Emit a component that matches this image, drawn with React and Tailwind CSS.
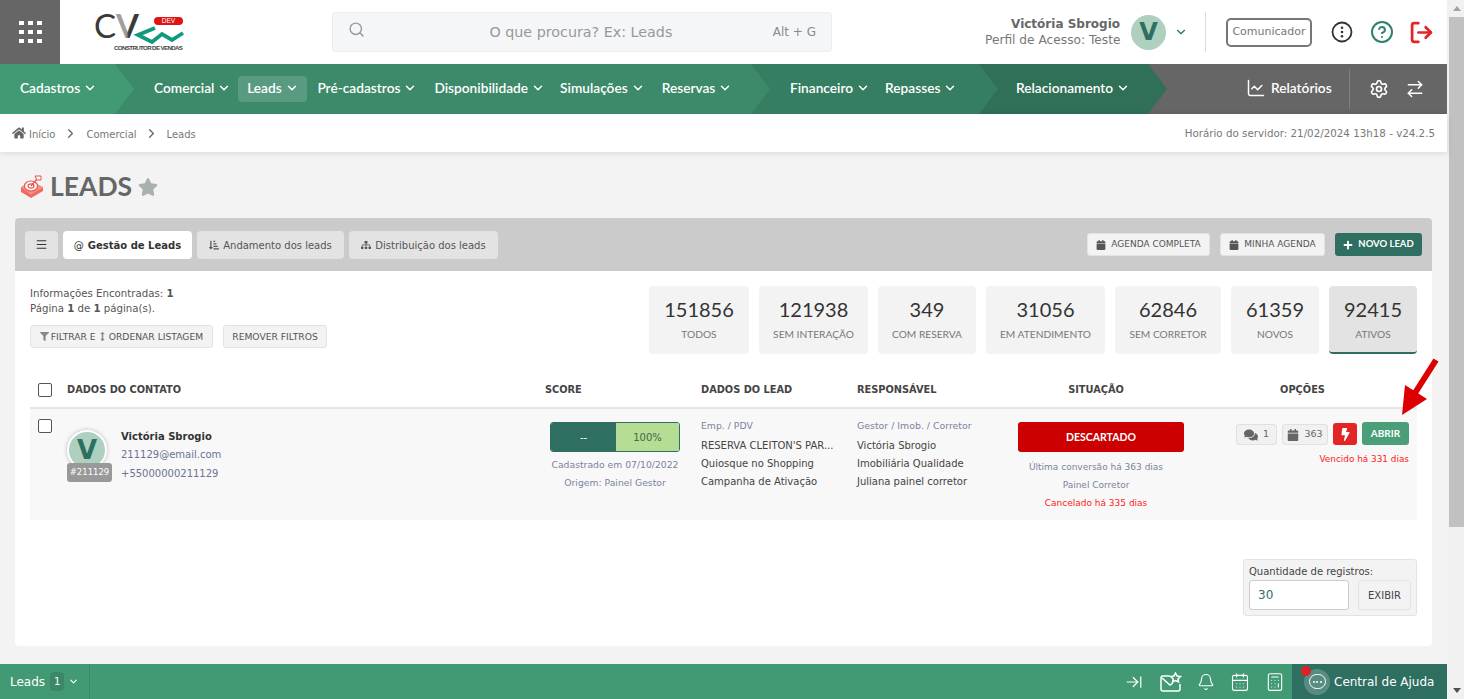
import React from "react";
import {
  ArrowRightLeft,
  ArrowRightToLine,
  Bell,
  Calculator,
  CalendarDays,
  ChartLine,
  ChevronDown,
  ChevronRight,
  CircleHelp,
  LogOut,
  Menu,
  Search,
  Settings,
} from "lucide-react";
import {
  FaArrowsAltV,
  FaBolt,
  FaCalendar,
  FaComments,
  FaFilter,
  FaHome,
  FaPlus,
  FaSitemap,
  FaSortAmountDownAlt,
  FaStar,
} from "react-icons/fa";

const stats = [
  { value: "151856", label: "TODOS", width: "w-[100px]" },
  { value: "121938", label: "SEM INTERAÇÃO", width: "w-[109px]" },
  { value: "349", label: "COM RESERVA", width: "w-[98px]" },
  { value: "31056", label: "EM ATENDIMENTO", width: "w-[119px]" },
  { value: "62846", label: "SEM CORRETOR", width: "w-[106px]" },
  { value: "61359", label: "NOVOS", width: "w-[88px]" },
];

const NavItem = ({ label, className = "" }) => (
  <span className={`flex items-center gap-[3px] text-[13.7px] font-semibold text-white ${className}`}>
    {label}
    <ChevronDown size={14} strokeWidth={2.5} />
  </span>
);

const Logo = () => (
  <svg width="108" height="56" viewBox="0 0 108 56">
    <defs>
      <linearGradient id="vFill" x1="0" x2="1" y1="0" y2="0">
        <stop offset="0.45" stopColor="#a39e9a" />
        <stop offset="0.55" stopColor="#3a3a38" />
      </linearGradient>
    </defs>
    <text x="9" y="34" fontFamily="Lato, sans-serif" fontSize="33" fill="#3a3a38">C</text>
    <text x="31" y="34" fontFamily="Lato, sans-serif" fontSize="33" fontWeight="700" fill="url(#vFill)">V</text>
    <path d="M70 24 L53 31 L67 38 L77 30 L87 36 L98 29" fill="none" stroke="#129a7c" strokeWidth="3.8" />
    <rect x="69" y="13" width="29" height="8" rx="4" fill="#e11414" />
    <text x="83.5" y="19.4" textAnchor="middle" fontFamily="Liberation Sans, sans-serif" fontSize="6.5" fill="#fff">DEV</text>
    <text x="29" y="46" fontFamily="Liberation Sans, sans-serif" fontSize="6.2" fill="#444" fontWeight="700" textLength="69">CONSTRUTOR DE VENDAS</text>
  </svg>
);

const LeadsIcon = () => (
  <svg width="24" height="24" viewBox="0 0 24 24">
    <path d="M1 13 L11 20 L23 13 V17 L11 24 L1 18 Z" fill="#ef6a5f" />
    <path d="M1 13 L11 7 L23 13 L11 20 Z" fill="#f58d80" />
    <ellipse cx="11" cy="12" rx="6.5" ry="5" fill="#fff" stroke="#e5534b" strokeWidth="1.2" />
    <ellipse cx="11" cy="12" rx="3" ry="2.2" fill="none" stroke="#e5534b" strokeWidth="1.2" />
    <path d="M11 12 L17 5" stroke="#e5534b" strokeWidth="1.2" />
    <path d="M15 2 h6 v4 h-4 z" fill="#fff" stroke="#e5534b" strokeWidth="1" />
  </svg>
);

const MailStar = () => (
  <svg width="22" height="20" viewBox="0 0 22 20" fill="none" stroke="white" strokeWidth="1.5">
    <path d="M10 4 H3 a2 2 0 0 0 -2 2 V17 a2 2 0 0 0 2 2 H18 a2 2 0 0 0 2 -2 V12" />
    <path d="M2 6 L10 13 L13 11" />
    <path d="M15.5 1 L17 4 L20.5 4.5 L18 7 L18.6 10 L15.5 8.6 L12.6 10 L13.2 7 L10.8 4.5 L14 4 Z" />
  </svg>
);

const DotsCircle = () => (
  <svg width="22" height="22" viewBox="0 0 22 22">
    <circle cx="11" cy="11" r="9.5" fill="none" stroke="#333" strokeWidth="1.8" />
    <circle cx="11" cy="6.8" r="1.3" fill="#333" />
    <circle cx="11" cy="11" r="1.3" fill="#333" />
    <circle cx="11" cy="15.2" r="1.3" fill="#333" />
  </svg>
);

const Scrollbar = () => (
  <div className="flex w-[17px] flex-col bg-[#f1f1f1] pl-[2px]">
    <div className="flex h-[17px] items-center justify-center">
      <div className="h-0 w-0 border-x-[4px] border-b-[5px] border-x-transparent border-b-[#a3a3a3]" />
    </div>
    <div className="h-[510px] bg-[#c1c1c1]" />
    <div className="flex-1" />
    <div className="flex h-[17px] items-center justify-center">
      <div className="h-0 w-0 border-x-[4px] border-t-[5px] border-x-transparent border-t-[#505050]" />
    </div>
  </div>
);

const Header = () => (
  <header className="flex h-16 shrink-0 items-center bg-white">
    <div className="grid h-16 w-[60px] shrink-0 grid-cols-3 content-center justify-center gap-x-[5px] gap-y-[4.5px] bg-[#666666] px-[19px]">
      {[0, 1, 2, 3, 4, 5, 6, 7, 8].map((i) => (
        <span key={i} className="h-[4.5px] w-[4.5px] bg-white" />
      ))}
    </div>
    <div className="ml-[25px] w-[247px] shrink-0">
      <Logo />
    </div>
    <div className="flex h-10 w-[500px] shrink-0 items-center rounded border border-[#ebedef] bg-[#f5f6f8] pl-[15px] pr-[15px] text-[#8a8a8a]">
      <Search size={17} className="-mt-[6px] text-[#999999]" />
      <span className="flex-1 pl-[24px] pt-px text-center text-[14.3px] text-[#999999]">O que procura? Ex: Leads</span>
      <span className="text-[12px]">Alt + G</span>
    </div>
    <div className="ml-[153px] w-[135px] shrink-0 text-right text-[#666666]">
      <div className="text-[12px] font-bold leading-[15px]">Victória Sbrogio</div>
      <div className="whitespace-nowrap pt-px text-[12.2px] leading-[15px] text-[#777777]">Perfil de Acesso: Teste</div>
    </div>
    <div className="ml-[11px] flex h-[35px] w-[35px] shrink-0 items-center justify-center rounded-full bg-[#aed0be] text-[24px] font-bold text-[#2f6f62]">
      V
    </div>
    <ChevronDown size={14} className="ml-[8px] text-[#2f6f62]" />
    <div className="ml-[17px] h-10 w-px bg-[#dddddd]" />
    <div className="ml-5 flex h-[29px] w-[86px] items-center justify-center rounded-[5px] border-2 border-[#777777] pt-px text-[11px] text-[#777777]">
      Comunicador
    </div>
    <div className="ml-[19px]">
      <DotsCircle />
    </div>
    <CircleHelp size={24} strokeWidth={2} className="ml-[17px] text-[#2f7f72]" />
    <LogOut size={25} strokeWidth={2.6} className="ml-[15px] text-[#e62424]" />
  </header>
);

const NavBar = () => (
  <nav className="flex h-[50px] shrink-0 bg-[#666666] font-['Lato',sans-serif]">
    <div className="relative z-40 flex w-[134px] shrink-0 items-center bg-[#429a75] pb-[2px] pl-5 [clip-path:polygon(0_0,calc(100%-19px)_0,100%_50%,calc(100%-19px)_100%,0_100%)]">
      <NavItem label="Cadastros" />
    </div>
    <div className="relative z-30 -ml-[19px] flex w-[655px] shrink-0 items-center bg-[#3c8a6a] pl-[39px] [clip-path:polygon(0_0,calc(100%-19px)_0,100%_50%,calc(100%-19px)_100%,0_100%)]">
      <NavItem label="Comercial" className="pb-[2px]" />
      <div className="ml-[7px] flex h-[26px] w-[69px] items-center justify-center rounded bg-white/15">
        <NavItem label="Leads" className="pb-[2px]" />
      </div>
      <NavItem label="Pré-cadastros" className="ml-[10px] pb-[2px]" />
      <NavItem label="Disponibilidade" className="ml-[17px] pb-[2px]" />
      <NavItem label="Simulações" className="ml-[15px] pb-[2px]" />
      <NavItem label="Reservas" className="ml-[17px] pb-[2px]" />
    </div>
    <div className="relative z-20 -ml-[19px] flex w-[247px] shrink-0 items-center bg-[#367e62] pb-[2px] pl-[39px] [clip-path:polygon(0_0,calc(100%-19px)_0,100%_50%,calc(100%-19px)_100%,0_100%)]">
      <NavItem label="Financeiro" />
      <NavItem label="Repasses" className="ml-[15px]" />
    </div>
    <div className="relative z-10 -ml-[19px] flex w-[188px] shrink-0 items-center bg-[#2f7056] pb-[2px] pl-[37px] [clip-path:polygon(0_0,calc(100%-19px)_0,100%_50%,calc(100%-19px)_100%,0_100%)]">
      <NavItem label="Relacionamento" />
    </div>
    <div className="ml-[79px] flex items-center gap-[5px] pb-[2px] text-[13.7px] font-semibold text-white">
      <ChartLine size={20} strokeWidth={1.8} />
      Relatórios
    </div>
    <div className="my-[5px] ml-[17px] w-px bg-[#808080]" />
    <Settings size={20} strokeWidth={2} className="ml-[19px] self-center text-white" />
    <ArrowRightLeft size={20} strokeWidth={1.8} className="ml-[16px] self-center text-white" />
  </nav>
);

const Breadcrumb = () => (
  <div className="relative z-10 flex h-[38px] shrink-0 items-center bg-white pl-3 pr-3 text-[10px] text-[#777777] shadow-[0_1px_6px_rgba(0,0,0,0.12)]">
    <FaHome size={14} className="text-[#666666]" />
    <span className="ml-[3px] pt-[2px]">Início</span>
    <ChevronRight size={15} className="ml-2 text-[#666666]" />
    <span className="ml-2 pt-[2px]">Comercial</span>
    <ChevronRight size={15} className="ml-[7px] text-[#666666]" />
    <span className="ml-[8px] pt-[2px]">Leads</span>
    <span className="ml-auto pt-px text-[10.3px]">Horário do servidor: 21/02/2024 13h18 - v24.2.5</span>
  </div>
);

const CardHead = () => (
  <div className="flex h-[53px] items-center rounded-t-[4px] bg-[#cbcbcb] pl-[10px] pr-[10px]">
    <div className="flex h-7 w-[33px] items-center justify-center rounded bg-[#e3e3e3] text-[#333333]">
      <Menu size={13} />
    </div>
    <div className="ml-[5px] flex h-7 w-[129px] items-center justify-center gap-1 rounded bg-white pt-px text-[10px] font-bold text-[#333333]">
      <span className="font-normal">@</span> Gestão de Leads
    </div>
    <div className="ml-[5px] flex h-7 w-[147px] items-center justify-center gap-1 rounded bg-[#e3e3e3] pt-px text-[10px] text-[#555555]">
      <FaSortAmountDownAlt size={10} /> Andamento dos leads
    </div>
    <div className="ml-[5px] flex h-7 w-[149px] items-center justify-center gap-1 rounded bg-[#e3e3e3] pt-px text-[10px] text-[#555555]">
      <FaSitemap size={10} /> Distribuição dos leads
    </div>
    <div className="ml-auto flex h-[23px] w-[123px] items-center justify-center gap-[5px] rounded-[3px] border border-[#e3e3e3] bg-[#f3f3f3] pt-px text-[9px] text-[#555555]">
      <FaCalendar size={10} /> AGENDA COMPLETA
    </div>
    <div className="ml-[10px] flex h-[23px] w-[105px] items-center justify-center gap-[5px] rounded-[3px] border border-[#e3e3e3] bg-[#f3f3f3] pt-px text-[9px] text-[#555555]">
      <FaCalendar size={10} /> MINHA AGENDA
    </div>
    <div className="ml-[10px] flex h-[23px] w-[87px] items-center justify-center gap-[5px] rounded-[3px] bg-[#2f6f62] font-['Lato',sans-serif] text-[9.5px] font-bold text-white">
      <FaPlus size={10} /> NOVO LEAD
    </div>
  </div>
);

const Summary = () => (
  <div className="flex justify-between">
    <div className="text-[10.2px] leading-[15px] text-[#555555]">
      <div>
        Informações Encontradas: <b>1</b>
      </div>
      <div>
        Página <b>1</b> de <b>1</b> página(s).
      </div>
      <div className="mt-[9px] flex gap-[10px]">
        <div className="flex h-[23px] w-[183px] items-center justify-center gap-[2px] rounded-[3px] border border-[#e3e3e3] bg-[#f3f3f3] text-[9.2px] text-[#555555]">
          <FaFilter size={9} className="text-[#888888]" /> FILTRAR E
          <FaArrowsAltV size={9} className="text-[#888888]" /> ORDENAR LISTAGEM
        </div>
        <div className="flex h-[23px] w-[104px] items-center justify-center rounded-[3px] border border-[#e3e3e3] bg-[#f3f3f3] text-[9.2px] text-[#555555]">
          REMOVER FILTROS
        </div>
      </div>
    </div>
    <div className="flex gap-[10px] font-['Lato',sans-serif]">
      {stats.map((s) => (
        <div key={s.label} className={`flex h-[68px] flex-col items-center rounded bg-[#f3f3f3] pt-[11px] ${s.width}`}>
          <span className="text-[20px] leading-[24px] text-[#333333]">{s.value}</span>
          <span className="mt-[6px] text-[10.2px] leading-[14px] text-[#777777]">{s.label}</span>
        </div>
      ))}
      <div className="flex h-[68px] w-[88px] flex-col items-center rounded border-b-2 border-[#2f6f62] bg-[#e3e3e3] pt-[11px]">
        <span className="text-[20px] leading-[24px] text-[#333333]">92415</span>
        <span className="mt-[6px] text-[10.2px] leading-[14px] text-[#777777]">ATIVOS</span>
      </div>
    </div>
  </div>
);

const rowGrid = "grid grid-cols-[37px_478px_156px_156px_151px_176px_233px]";

const LeadTable = () => (
  <div className="mt-[19px]">
    <div className={`${rowGrid} h-[36px] items-center border-b-2 border-[#e5e5e5] text-[9.8px] font-bold text-[#444444]`}>
      <div className="pl-2">
        <div className="h-[14px] w-[14px] rounded-[2px] border border-[#555555] bg-white" />
      </div>
      <div>DADOS DO CONTATO</div>
      <div>SCORE</div>
      <div>DADOS DO LEAD</div>
      <div>RESPONSÁVEL</div>
      <div className="text-center">SITUAÇÃO</div>
      <div className="pl-[4px] text-center">OPÇÕES</div>
    </div>
    <div className={`${rowGrid} h-[111px] bg-[#f8f8f8] pt-[11px] text-[10px]`}>
      <div className="pl-2">
        <div className="-mt-px h-[14px] w-[14px] rounded-[2px] border border-[#555555] bg-white" />
      </div>
      <div className="flex">
        <div className="relative mt-[10px] h-[40px] w-[40px]">
          <div className="flex h-[40px] w-[40px] items-center justify-center rounded-full border-2 border-white bg-[#aed0be] text-[26px] font-bold text-[#2f6f62] shadow-[0_0_4px_rgba(0,0,0,0.25)]">
            V
          </div>
          <div className="absolute left-0 top-[33px] flex h-[19px] w-[45px] items-center justify-center rounded-[3px] bg-[#999999] text-[8.5px] text-white">
            #211129
          </div>
        </div>
        <div className="ml-[14px] pt-[8px] text-[#6b7394]">
          <div className="text-[10px] font-bold leading-[17px] text-[#333333]">Victória Sbrogio</div>
          <div className="leading-[19px]">211129@email.com</div>
          <div className="leading-[19px]">+55000000211129</div>
        </div>
      </div>
      <div>
        <div className="ml-[5px] mt-[2px] flex h-[30px] w-[130px] overflow-hidden rounded-[3px] border border-[#2f6f62]">
          <div className="flex w-[65px] items-center justify-center bg-[#2f6f62] text-white">--</div>
          <div className="flex flex-1 items-center justify-center bg-[#b7dd95] text-[#3a6a45]">100%</div>
        </div>
        <div className="ml-[5px] mt-[4px] w-[130px] whitespace-nowrap text-center text-[9.25px] leading-[18px] text-[#7b83a0]">
          <div>Cadastrado em 07/10/2022</div>
          <div>Origem: Painel Gestor</div>
        </div>
      </div>
      <div className="text-[10px] leading-[18px] text-[#444444]">
        <div className="mb-[6px] pt-px text-[9.3px] leading-[10px] text-[#7b83a0]">Emp. / PDV</div>
        <div className="whitespace-nowrap">RESERVA CLEITON'S PAR...</div>
        <div>Quiosque no Shopping</div>
        <div>Campanha de Ativação</div>
      </div>
      <div className="text-[10px] leading-[18px] text-[#444444]">
        <div className="mb-[6px] pt-px text-[9.4px] leading-[10px] text-[#7b83a0]">Gestor / Imob. / Corretor</div>
        <div>Victória Sbrogio</div>
        <div>Imobiliária Qualidade</div>
        <div>Juliana painel corretor</div>
      </div>
      <div className="text-center text-[9px] leading-[18px] text-[#7b83a0]">
        <div className="ml-auto mt-[2px] flex h-[30px] w-[166px] items-center justify-center rounded-[3px] bg-[#cc0000] pb-px font-['Lato',sans-serif] text-[10.5px] font-bold text-white">
          DESCARTADO
        </div>
        <div className="mt-[6px]">Última conversão há 363 dias</div>
        <div>Painel Corretor</div>
        <div className="text-[#ff1a1a]">Cancelado há 335 dias</div>
      </div>
      <div className="flex flex-col items-end pr-2">
        <div className="mt-[2px] flex h-[23px] items-end gap-[5px] text-[9.5px] text-[#666666]">
          <div className="flex h-[21px] w-[41px] items-center justify-center gap-[5px] rounded-[3px] border border-[#e0e0e0] bg-[#f1f1f1]">
            <FaComments size={14} /> 1
          </div>
          <div className="flex h-[21px] w-[46px] items-center justify-center gap-[5px] rounded-[3px] border border-[#e0e0e0] bg-[#f1f1f1]">
            <FaCalendar size={12} /> 363
          </div>
          <div className="flex h-[22px] w-6 items-center justify-center rounded-[3px] bg-[#e22626] text-white">
            <FaBolt size={13} />
          </div>
          <div className="flex h-[23px] w-[47px] items-center justify-center rounded-[3px] bg-[#4a9f7a] font-['Lato',sans-serif] text-[10px] font-bold text-white">
            ABRIR
          </div>
        </div>
        <div className="mt-[7px] text-[8.9px] leading-[14px] text-[#ff1a1a]">Vencido há 331 dias</div>
      </div>
    </div>
  </div>
);

const Quantity = () => (
  <div className="ml-auto mt-[39px] h-[57px] w-[174px] rounded-[3px] border border-[#e3e3e3] bg-[#f3f3f3] px-[5px] pt-[5px] text-[10px] text-[#444444]">
    <div className="leading-[14px]">Quantidade de registros:</div>
    <div className="mt-[1px] flex gap-[9px]">
      <div className="flex h-[30px] w-[100px] items-center rounded-[3px] border border-[#cccccc] bg-white pl-2 text-[12px] text-[#2f6f62]">
        30
      </div>
      <div className="flex h-[30px] w-[53px] items-center justify-center rounded-[3px] border border-[#e3e3e3] text-[10px]">
        EXIBIR
      </div>
    </div>
  </div>
);

const Footer = () => (
  <footer className="flex h-[35px] shrink-0 items-center bg-[#429a75] text-white">
    <span className="ml-[10px] text-[12px]">Leads</span>
    <span className="ml-[5px] flex h-[19px] w-[14px] items-center justify-center rounded-[4px] bg-[#3a8868] text-[10px]">1</span>
    <ChevronDown size={11} strokeWidth={2.5} className="ml-[4px]" />
    <div className="ml-[10px] h-full w-px bg-[#3a8868]" />
    <div className="ml-auto flex items-center">
      <ArrowRightToLine size={18} strokeWidth={1.6} />
      <div className="ml-[17px]">
        <MailStar />
      </div>
      <Bell size={18} strokeWidth={1.5} className="ml-[15px]" />
      <CalendarDays size={20} strokeWidth={1.3} className="ml-[15px]" />
      <Calculator size={20} strokeWidth={1.3} className="ml-[15px]" />
    </div>
    <div className="relative ml-[7px] flex h-full w-[155px] items-center bg-[#2f6f62] pl-[12px]">
      <div className="flex h-[26px] w-[26px] items-center justify-center rounded-full bg-white/20">
        <div className="flex h-[15px] w-[17px] items-center justify-center gap-[1.5px] rounded-full border-[1.5px] border-white">
          <span className="h-[2px] w-[2px] rounded-full bg-white" />
          <span className="h-[2px] w-[2px] rounded-full bg-white" />
          <span className="h-[2px] w-[2px] rounded-full bg-white" />
        </div>
      </div>
      <span className="ml-[4px] whitespace-nowrap text-[12px]">Central de Ajuda</span>
      <span className="absolute left-[9px] top-[2px] h-[10px] w-[10px] rounded-full bg-[#e12025]" />
    </div>
  </footer>
);

export default function App() {
  return (
    <div className="relative flex h-screen overflow-hidden bg-white font-['DejaVu_Sans',sans-serif]">
      <div className="flex w-[1447px] shrink-0 flex-col">
        <Header />
        <NavBar />
        <Breadcrumb />
        <main className="flex-1 overflow-hidden bg-[#f3f3f3] px-[15px]">
          <div className="flex h-[66px] items-center pl-[5px] pt-[2px]">
            <LeadsIcon />
            <h1 className="ml-[6px] pt-[2px] font-['Lato',sans-serif] text-[26.5px] font-bold text-[#666666]">LEADS</h1>
            <FaStar size={20} className="ml-[6px] mt-[1px] text-[#a9b0ae]" />
          </div>
          <section className="h-[428px] rounded-[4px] bg-white">
            <CardHead />
            <div className="px-[15px] pt-[15px]">
              <Summary />
              <LeadTable />
              <Quantity />
            </div>
          </section>
        </main>
        <Footer />
      </div>
      <Scrollbar />
      <svg className="absolute left-[1395px] top-[355px]" width="48" height="64" viewBox="0 0 48 64">
        <path d="M41 5 L20 38" stroke="#dd0000" strokeWidth="6" />
        <path d="M7 60 L10 30 L32 44 Z" fill="#dd0000" />
      </svg>
    </div>
  );
}
